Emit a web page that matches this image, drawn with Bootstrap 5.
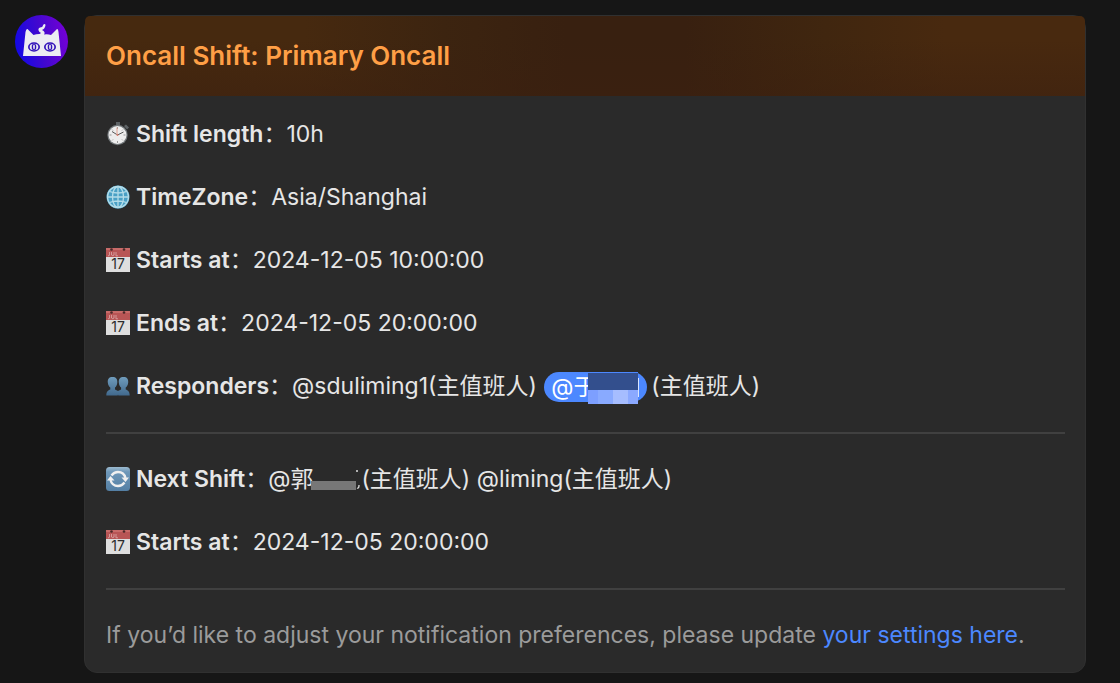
<!DOCTYPE html>
<html lang="en">
<head>
<meta charset="utf-8">
<meta name="viewport" content="width=device-width, initial-scale=1">
<title>Oncall Shift</title>
<link href="https://cdn.jsdelivr.net/npm/bootstrap@5.3.0/dist/css/bootstrap.min.css" rel="stylesheet">
<style>
body{background:#161616;color:#e6e6e6;font-family:Inter,"Noto Sans CJK SC",sans-serif;font-size:23px;line-height:31px}
.chat{padding:15px 34px 10px 15px;gap:16px}
.avatar{width:53px;height:53px}
.shift-card{background:#2a2a2a;border:1px solid #303030;border-radius:13px;color:inherit;min-width:0}
.shift-head{background:linear-gradient(to top,rgba(60,32,16,.5),transparent 70%),linear-gradient(90deg,#46290f 0,#46290f 22%,#3c2410 36%,#382010 48%,#382010 60%,#40260f 74%,#48290f 86%,#48290f 100%);padding:24px 21px;border:0;border-radius:12px 12px 0 0}
.shift-head h1{color:#ff9f46;font-size:26px;line-height:32px;font-weight:600}
.shift-body{padding:23px 20px 21px 21px}
.rows{gap:32px}
.rows strong{font-weight:600}
.ico{width:24px;height:24px;margin:0 6px 2px 0}
.rule{border:0;height:2px;background:#404040;opacity:1;margin:30px 0}
.mention{display:inline-block;position:relative;background:#4c88ff;color:#fff;border-radius:15px;width:103px;height:30px;line-height:30px;padding-left:7px;margin:0 4px 0 1px;white-space:nowrap}
.mention svg{position:absolute;left:44px;top:0;width:51px;height:32px}
.masked{width:50px;height:31px;margin-left:-2px}
.foot{color:#9b9b9b}
.foot a{color:#4c88ff;text-decoration:none}
</style>
</head>
<body>
<svg class="d-none" aria-hidden="true">
<symbol id="calendar" viewBox="0 0 24 24"><path fill="#dedede" d="M0 0h24v24H0z"/><path fill="#b85555" d="M0 0h24v9H0z"/><path fill="#c86b69" d="M0 0h24v2H0z"/><circle cx="5.500" cy="1.500" r="1.300" fill="#4b2828"/><circle cx="18" cy="1.500" r="1.300" fill="#4b2828"/><path d="M3.500 4v3q0 1-1.500.8M5.500 4v3q1.500 1.500 2.500 0V4M10 4v3.800h2" fill="none" stroke="#e0b4b4" stroke-width=".7"/><text x="12" y="21" text-anchor="middle" font-family="Inter,sans-serif" font-size="14" fill="#2c2c2c">17</text></symbol>
</svg>
<main class="chat d-flex align-items-start">
<svg class="avatar flex-shrink-0" viewBox="0 0 53 53" role="img" aria-label="Cat avatar">
<defs><linearGradient id="av" x1="0" y1=".6" x2="1" y2=".4"><stop stop-color="#1208e6"/><stop offset=".5" stop-color="#4208cf"/><stop offset="1" stop-color="#7400d6"/></linearGradient></defs>
<circle cx="26.500" cy="26.500" r="26.500" fill="url(#av)"/>
<path fill="#ececf2" d="M8 41 10.500 17Q11.500 12.500 13.500 15L18.500 20Q21 19 24.500 19Q27 18 24.500 17Q22 14 25 12.500Q28 12 28 10Q30 8 30.500 10Q30 14 27 15Q31 17 29 19.500Q33 19 36 20L41 15Q43 12 43.500 17L46 41Z"/>
<g fill="#3112b9"><ellipse cx="19" cy="32" rx="6" ry="4.700"/><ellipse cx="35" cy="32" rx="6" ry="4.700"/></g>
<g fill="#ececf2"><ellipse cx="19" cy="32" rx="4.300" ry="3.300"/><ellipse cx="35" cy="32" rx="4.300" ry="3.300"/></g>
<g fill="#3112b9"><ellipse cx="19" cy="32" rx="2.300" ry="3.300"/><ellipse cx="35" cy="32" rx="2.300" ry="3.300"/></g>
<g fill="#ececf2"><ellipse cx="19" cy="32" rx=".9" ry="2.400"/><ellipse cx="35" cy="32" rx=".9" ry="2.400"/></g>
</svg>
<article class="card shift-card flex-grow-1">
<header class="card-header shift-head"><h1 class="m-0">Oncall Shift: Primary Oncall</h1></header>
<div class="card-body shift-body">
<div class="rows d-flex flex-column">
<div class="d-flex align-items-center"><svg class="ico flex-shrink-0" viewBox="0 0 24 24" aria-hidden="true"><path d="M10 0h4v5h-4zM18 4l2-1.500 3 3-2 2z" fill="#5d6265"/><circle cx="11.500" cy="13" r="10.200" fill="#73787b"/><circle cx="11.500" cy="13" r="9" fill="#ededed"/><path d="M11.500 5v2M11.500 19v2M3.500 13h2M17.500 13h2M6 7.500l1 1M17 7.500l-1 1M6 18.500l1-1M17 18.500l-1-1" stroke="#999"/><path d="m6 9.500 5.500 3.500 6-3" fill="none" stroke="#555"/><path d="M11 5.500v7.500" stroke="#e0a090"/><circle cx="11.500" cy="13" r="1" fill="#d78070"/></svg><span><strong>Shift length</strong>：10h</span></div>
<div class="d-flex align-items-center"><svg class="ico flex-shrink-0" viewBox="0 0 24 24" aria-hidden="true"><circle cx="12" cy="12" r="11.500" fill="#49a0c5"/><g fill="none" stroke="#b3dce9" stroke-width="1.300"><circle cx="12" cy="12" r="10.500"/><ellipse cx="12" cy="12" rx="5.500" ry="10.500"/><path d="M12 1.500v21M1.500 12h21M3.500 6.500q8.500 3 17 0M3.500 17.500q8.500-3 17 0"/></g></svg><span><strong>TimeZone</strong>：Asia/Shanghai</span></div>
<div class="d-flex align-items-center"><svg class="ico flex-shrink-0" aria-hidden="true"><use href="#calendar"/></svg><span><strong>Starts at</strong>：2024-12-05 10:00:00</span></div>
<div class="d-flex align-items-center"><svg class="ico flex-shrink-0" aria-hidden="true"><use href="#calendar"/></svg><span><strong>Ends at</strong>：2024-12-05 20:00:00</span></div>
<div class="d-flex align-items-center"><svg class="ico flex-shrink-0" viewBox="0 0 24 24" aria-hidden="true"><defs><linearGradient id="pp" x2="0" y2="1"><stop stop-color="#6f9cbc"/><stop offset="1" stop-color="#41698d"/></linearGradient></defs><path fill="url(#pp)" d="M6.500 3C3 3 1.500 5 1.800 8.500 2 11 3 12.500 4.300 13.500v2C2 16.500.5 17 .3 21.500h11.400l.3-1 .3 1h11.400c-.2-4.500-1.700-5-4-6v-2c1.300-1 2.300-2.500 2.500-5C22.500 5 21 3 17.500 3S12.500 5 12.800 8.500c.2 2.500 1 4 2.300 5v2L12 17l-3-1.500v-2c1.300-1 2.100-2.500 2.300-5C11.600 5 10 3 6.500 3Z"/></svg><span class="d-flex align-items-center"><span><strong>Responders</strong>：@sduliming1(主值班人)&nbsp;</span><span class="mention">@于<svg viewBox="0 0 51 32" aria-hidden="true"><path fill="#334f8d" d="M0 1h50v17H0z"/><path fill="#4c88ff" d="M0 0h50v1H0z"/><path fill="#7d9fff" d="M0 18h10v14H0z"/><path fill="#89aaff" d="M10 18h15v14H10z"/><path fill="#a6bdff" d="M25 18h15v14H25z"/><path fill="#8ba9ff" d="M40 18h10v14H40z"/><path fill="#d9e5ff" d="M50 6h1v19h-1z"/></svg></span><span>(主值班人)</span></span></div>
</div>
<hr class="rule">
<div class="rows d-flex flex-column">
<div class="d-flex align-items-center"><svg class="ico flex-shrink-0" viewBox="0 0 24 24" aria-hidden="true"><defs><linearGradient id="rf" x2="0" y2="1"><stop stop-color="#9dbbd0"/><stop offset=".2" stop-color="#6f98b9"/><stop offset="1" stop-color="#547fa4"/></linearGradient></defs><rect width="24" height="24" rx="3.500" fill="url(#rf)"/><g fill="none" stroke="#f0f0f0" stroke-width="2.300"><path d="M5.500 8.500Q8 5 12 5q6 0 7.500 6M18.500 15.500Q16 19 12 19q-6 0-7.500-6"/></g><path fill="#f0f0f0" d="M15.500 10.500H23L19.500 15zM1 13.500h7.500L4.500 9z"/></svg><span class="d-flex align-items-center"><span><strong>Next Shift</strong>：@郭</span><svg class="masked" viewBox="0 0 50 31" aria-hidden="true"><path fill="#777" d="M0 17h45v9H0z"/><path d="M45 7h2M46 24q2 1 2-3" fill="none" stroke="#ddd" stroke-width="1.300"/></svg><span>(主值班人) @liming(主值班人)</span></span></div>
<div class="d-flex align-items-center"><svg class="ico flex-shrink-0" aria-hidden="true"><use href="#calendar"/></svg><span><strong>Starts at</strong>：2024-12-05 20:00:00</span></div>
</div>
<hr class="rule">
<p class="foot m-0">If you’d like to adjust your notification preferences, please update <a href="#settings">your settings here</a>.</p>
</div>
</article>
</main>
<script src="https://cdn.jsdelivr.net/npm/bootstrap@5.3.0/dist/js/bootstrap.bundle.min.js"></script>
</body>
</html>
